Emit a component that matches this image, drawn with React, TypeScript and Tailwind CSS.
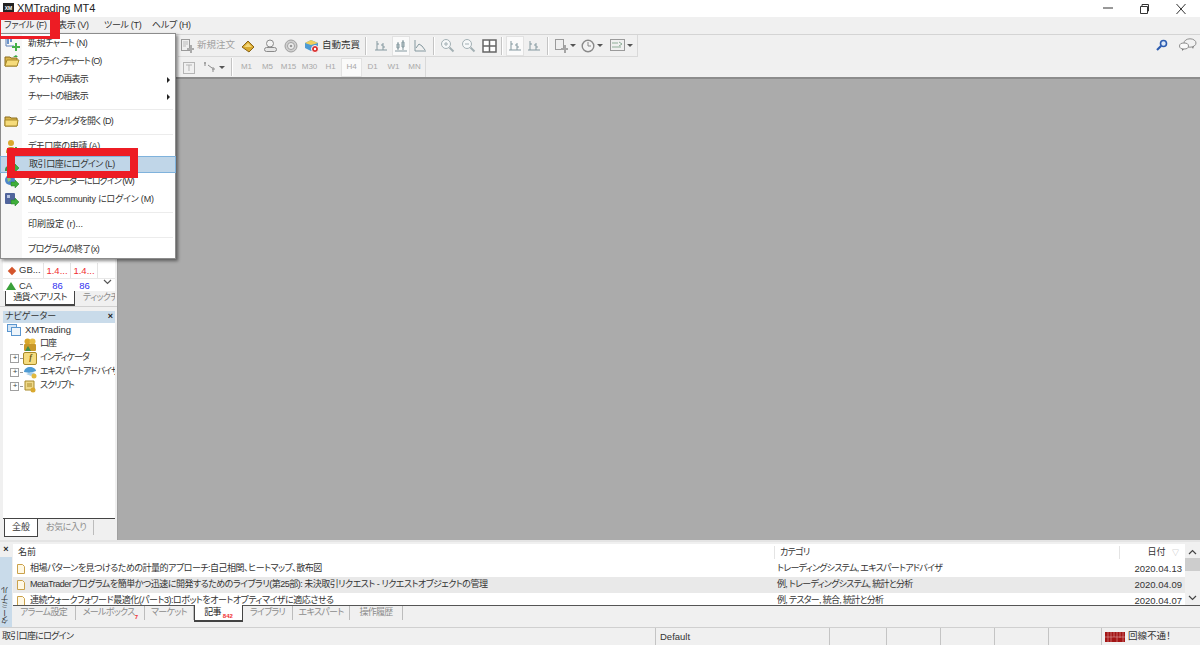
import type { ReactNode } from "react";

const Ic = ({ children, w = 14, h = 14 }: { children: ReactNode; w?: number; h?: number }) => (
  <svg width={w} height={h} viewBox={`0 0 ${w} ${h}`} className="block shrink-0">
    {children}
  </svg>
);

const Folder = ({ open }: { open?: boolean }) => (
  <Ic w={16} h={14}>
    <path d="M1 3h5l1 1h6v8H1z" fill="#d9b44a" stroke="#8a6d1f" />
    <path d={open ? "M3 6h12l-2 6H1z" : "M1 6h13l-1 6H1z"} fill="#f6dc7c" stroke="#a88a2a" />
    {open && <path d="M9 3l3-2 2 2-2 0z" fill="#39a845" />}
  </Ic>
);

const Arrow = ({ x = 6, y = 6 }: { x?: number; y?: number }) => (
  <path transform={`translate(${x} ${y})`} d="M0 2h4V0l4 4-4 4V6H0z" fill="#3fae3a" stroke="#1f7a22" strokeWidth=".5" />
);

const MenuIcon = ({ kind }: { kind: string }) => {
  if (kind === "chart")
    return (
      <Ic w={16} h={15}>
        <path d="M2 1v9h8" fill="none" stroke="#5b7fb5" />
        <path d="M4 3v5M7 2v4" stroke="#6b93c9" strokeWidth="2" />
        <path d="M8 10h3V7h2v3h3v2h-3v3h-2v-3H8z" fill="#44b048" />
      </Ic>
    );
  if (kind === "open") return <Folder open />;
  if (kind === "folder") return <Folder />;
  if (kind === "demo")
    return (
      <Ic w={16} h={15}>
        <circle cx="7" cy="4" r="3" fill="#d9a92f" />
        <path d="M2 14c0-5 2-6 5-6s5 1 5 6z" fill="#c99a2a" />
        <path d="M9 10h2V8h2v2h2v2h-2v2h-2v-2H9z" fill="#44b048" />
      </Ic>
    );
  if (kind === "login")
    return (
      <Ic w={16} h={15}>
        <circle cx="6" cy="4" r="3" fill="#d9a92f" />
        <path d="M1 13c0-5 2-5 5-5s4 1 4 5z" fill="#3f8f4a" />
        <Arrow x={7} y={6} />
      </Ic>
    );
  if (kind === "web")
    return (
      <Ic w={16} h={15}>
        <circle cx="6" cy="6" r="5" fill="#4d86c9" />
        <path d="M3 4l3-1 1 3-3 2z" fill="#8fc07a" />
        <Arrow x={7} y={6} />
      </Ic>
    );
  return (
    <Ic w={16} h={15}>
      <rect x="1" y="1" width="10" height="11" rx="1" fill="#51659c" />
      <rect x="3" y="3" width="3" height="3" fill="#b9c6e4" />
      <Arrow x={7} y={6} />
    </Ic>
  );
};

const menu = [
  { label: "新規チャート (N)", icon: "chart", t: "tracking-[-0.5px]" },
  { label: "オフラインチャート (O)", icon: "open", t: "tracking-[-1px]" },
  { label: "チャートの再表示", sub: true, t: "tracking-[-0.9px]" },
  { label: "チャートの組表示", sub: true, t: "tracking-[-0.9px]" },
  { sep: true },
  { label: "データフォルダを開く (D)", icon: "folder", t: "tracking-[-0.7px]" },
  { sep: true },
  { label: "デモ口座の申請 (A)", icon: "demo", t: "tracking-[-0.4px]" },
  { label: "取引口座にログイン (L)", icon: "login", active: true, t: "tracking-[-0.4px]" },
  { label: "ウェブトレーダーにログイン (W)", icon: "web", t: "tracking-[-1px]" },
  { label: "MQL5.community にログイン (M)", icon: "mql", t: "tracking-[-0.2px]" },
  { sep: true },
  { label: "印刷設定 (r)...", t: "tracking-normal" },
  { sep: true },
  { label: "プログラムの終了(x)", t: "tracking-[-0.65px]" },
];

const FileMenu = () => (
  <div className="absolute left-0 top-[33px] z-20 w-[176px] h-[226px] bg-white border border-[#8c8c8c] shadow-[2px_2px_3px_rgba(0,0,0,0.45)] flex flex-col pt-px">
    <div className="absolute left-0 top-0 bottom-0 w-[21px] bg-[#f7f7f7]" />
    {menu.map((m, i) =>
      m.sep ? (
        <div key={i} className="h-[7px] flex items-center pl-[27px] pr-[2px] shrink-0">
          <div className="h-px w-full bg-[#ececec]" />
        </div>
      ) : (
        <div
          key={i}
          className={`relative h-[17.75px] shrink-0 flex items-center pl-[27px] text-[#333] ${m.t} ${
            m.active ? "bg-[#c0d6e8] border border-[#7fb2dc] -mx-px pl-[28px]" : ""
          }`}
        >
          {m.icon && (
            <span className="absolute left-[3px] top-[1px]">
              <MenuIcon kind={m.icon} />
            </span>
          )}
          {m.label}
          {m.sub && <span className="absolute right-[5px] top-[6px] border-l-[3px] border-l-[#222] border-y-[3px] border-y-transparent" />}
        </div>
      ),
    )}
  </div>
);

const Sep = () => <div className="w-[2px] h-[18px] mx-[3px] bg-[#c4c4c4] border-r border-white shrink-0" />;

const Tool = ({ w = 22, active, children }: { w?: number; active?: boolean; children: ReactNode }) => (
  <div
    className={`h-[20px] flex items-center justify-center shrink-0 ${active ? "bg-[#fafafa] border border-[#e2e2e2]" : ""}`}
    style={{ width: w }}
  >
    {children}
  </div>
);

const Candle = ({ kind }: { kind: number }) => (
  <Ic w={14} h={14}>
    {kind === 0 && <path d="M3 2v9M1 11h12M3 5h2M9 4v7M7 6h2M9 8h2" stroke="#84989f" fill="none" />}
    {kind === 1 && <path d="M4 3v8M9 1v10M1 12h12M3 5h2v4H3zM8 3h2v5H8z" stroke="#84989f" fill="#f2f6f2" />}
    {kind === 2 && <path d="M2 1v11h11M3 9l3-4 3 2 3 4" stroke="#84989f" fill="none" />}
  </Ic>
);

const Drop = () => <span className="ml-[2px] border-t-[3px] border-t-[#555] border-x-[3px] border-x-transparent" />;

const Zoom = ({ plus }: { plus?: boolean }) => (
  <Ic w={15} h={15}>
    <circle cx="6" cy="6" r="4.5" fill="#f6f8f9" stroke="#a3b0b4" />
    <path d="M9.5 9.5l4 4" stroke="#a3b0b4" strokeWidth="2" />
    <path d={plus ? "M4 6h4M6 4v4" : "M4 6h4"} stroke="#a3b0b4" />
  </Ic>
);

const Toolbar = () => (
  <div className="h-[43px] bg-[#f0f0f0] border-t border-[#d4d4d4] pl-[178px]">
    <div className="h-[22px] w-[460px] flex items-center border-b border-r border-[#d9d9d9]">
      <Tool w={18}>
        <Ic w={14} h={15}>
          <rect x="1.5" y="1.5" width="8" height="11" fill="#eee" stroke="#9a9a9a" />
          <path d="M3 4h5M3 6h5M3 8h3" stroke="#bbb" />
          <path d="M7 10h3V7h2v3h2v2h-2v3h-2v-3H7z" fill="#ababab" />
        </Ic>
      </Tool>
      <span className="w-[42px] text-[#a0a0a0] text-[9.5px] pl-px">新規注文</span>
      <Tool w={20}>
        <Ic w={14} h={14}>
          <path d="M1 8l6-6 6 6-5 5z" fill="#d9a92f" stroke="#8a651a" />
          <path d="M3 8l4-4 4 4" fill="#f4d77a" />
        </Ic>
      </Tool>
      <Tool w={24}>
        <Ic w={15} h={14}>
          <circle cx="7" cy="4.5" r="3.5" fill="#f3f3f3" stroke="#8a8a8a" />
          <rect x="1.5" y="8.5" width="12" height="4" rx="2" fill="#e6e6e6" stroke="#8a8a8a" />
        </Ic>
      </Tool>
      <Tool w={18}>
        <Ic w={14} h={14}>
          <circle cx="7" cy="7" r="6" fill="#cfcfcf" stroke="#a0a0a0" />
          <circle cx="7" cy="7" r="3.5" fill="#eee" stroke="#a0a0a0" />
          <circle cx="7" cy="7" r="1.3" fill="#999" />
        </Ic>
      </Tool>
      <Tool>
        <Ic w={15} h={15}>
          <path d="M1 5l6-3 7 3v5l-7 3-6-3z" fill="#4d9bd4" />
          <path d="M1 5l6 2 7-2-7-3z" fill="#f1cf5c" />
          <circle cx="11" cy="11" r="3.5" fill="#d82c2c" stroke="#fff" />
          <circle cx="11" cy="11" r="1.2" fill="#fff" />
        </Ic>
      </Tool>
      <span className="w-[40px] text-[#333] text-[9.5px]">自動売買</span>
      <Sep />
      <Tool><Candle kind={0} /></Tool>
      <Tool w={18} active><Candle kind={1} /></Tool>
      <Tool w={20}><Candle kind={2} /></Tool>
      <Sep />
      <Tool w={18}><Zoom plus /></Tool>
      <Tool w={24}><Zoom /></Tool>
      <Tool w={18}>
        <Ic w={15} h={14}>
          <path d="M1 1h13v12H1zM1 7h13M7.5 1v12" fill="#fff" stroke="#666" strokeWidth="1.5" />
        </Ic>
      </Tool>
      <Sep />
      <Tool w={18} active><Candle kind={0} /></Tool>
      <Tool w={20}><Candle kind={0} /></Tool>
      <Sep />
      <Tool w={26}>
        <Ic w={14} h={15}>
          <rect x="1.5" y="1.5" width="8" height="10" fill="#eee" stroke="#9a9a9a" />
          <path d="M7 10h3V7h2v3h2v2h-2v3h-2v-3H7z" fill="#a5a5a5" />
        </Ic>
        <Drop />
      </Tool>
      <Tool w={28}>
        <Ic w={14} h={14}>
          <circle cx="7" cy="7" r="5.8" fill="#f3f3f3" stroke="#8a8a8a" strokeWidth="1.4" />
          <path d="M7 3v4h3" fill="none" stroke="#8a8a8a" />
        </Ic>
        <Drop />
      </Tool>
      <Tool w={30}>
        <Ic w={15} h={13}>
          <rect x=".5" y=".5" width="14" height="11" fill="#f0f0f0" stroke="#9a9a9a" />
          <path d="M2 4h6M2 8h9M9 3l3 2-3 2" fill="none" stroke="#8fae98" />
        </Ic>
        <Drop />
      </Tool>
    </div>
    <div className="h-[20px] w-[248px] flex items-center border-r border-[#d9d9d9]">
      <Tool>
        <Ic w={13} h={13}>
          <rect x=".5" y="1.5" width="11" height="11" fill="none" stroke="#b5b5b5" />
          <path d="M3 4h6M6 4v6" stroke="#b5b5b5" />
        </Ic>
      </Tool>
      <Tool w={28}>
        <Ic w={14} h={12}>
          <path d="M2 1v4M1 2h2M5 4l4 3M10 6v5M9 8h3" stroke="#8a8a8a" fill="none" />
        </Ic>
        <Drop />
      </Tool>
      <Sep />
      {["M1", "M5", "M15", "M30", "H1", "H4", "D1", "W1", "MN"].map((t) => (
        <div
          key={t}
          className={`w-[21.4px] h-[19px] flex items-center justify-center text-[8px] text-[#a8a8a8] ${
            t === "H4" ? "bg-[#fafafa] border border-[#e2e2e2]" : ""
          }`}
        >
          {t}
        </div>
      ))}
    </div>
  </div>
);

const TabLabel = ({ children, active, w }: { children: ReactNode; active?: boolean; w: number }) => (
  <div
    className={`flex items-center justify-center shrink-0 tracking-[-0.7px] ${
      active ? "h-[17px] bg-white border-x border-b-2 border-[#444] text-[#222]" : "h-[14px] mt-px text-[#8c8c8c] border-r border-[#bcbcbc]"
    }`}
    style={{ width: w }}
  >
    {children}
  </div>
);

const Plus = () => (
  <span className="w-[9px] h-[9px] border border-[#a0a0a0] bg-white flex items-center justify-center text-[8px] leading-none text-[#444] shrink-0">
    +
  </span>
);

const TreeRow = ({ label, exp, children }: { label: string; exp?: boolean; children: ReactNode }) => (
  <div className="h-[14px] flex items-center gap-px pl-[7px] text-[#333] tracking-[-1px]">
    {exp ? <Plus /> : <span className="w-[9px] shrink-0" />}
    <span className="w-[2px] border-t border-dotted border-[#999] shrink-0" />
    {children}
    <span className="ml-[2px]">{label}</span>
  </div>
);

const LeftPanel = () => (
  <div className="w-[118px] shrink-0 bg-[#f0f0f0] border-r border-[#a0a0a0] flex flex-col overflow-hidden">
    <div className="h-[228px] flex flex-col justify-end pl-[3px] pr-[2px] border-b border-[#d0d0d0]">
      <div className="bg-white flex-1 flex flex-col justify-end overflow-hidden relative text-[9.5px]">
        <div className="h-[16px] flex items-center shrink-0 border-b border-[#e8e8e8]">
          <span className="w-[41px] flex items-center gap-[3px] pl-[5px] text-[#333] border-r border-[#e4e4e4] h-full">
            <span className="w-[8px] h-[8px] bg-[#d4552c] rotate-45 scale-75" />
            GB...
          </span>
          <span className="w-[27px] text-center text-[#f03030] border-r border-[#e4e4e4] h-full leading-[16px]">1.4...</span>
          <span className="w-[27px] text-center text-[#f03030] border-r border-[#e4e4e4] h-full leading-[16px]">1.4...</span>
        </div>
        <div className="h-[12px] flex shrink-0 overflow-hidden">
          <span className="w-[41px] flex items-start gap-[3px] pl-[3px] text-[#333] leading-[14px]">
            <span className="mt-[3px] border-b-[8px] border-b-[#3aa03a] border-x-[5px] border-x-transparent" />
            CA
          </span>
          <span className="w-[27px] text-center text-[#3030f0] leading-[14px]">86</span>
          <span className="w-[27px] text-center text-[#3030f0] leading-[14px]">86</span>
        </div>
        <svg width="9" height="6" viewBox="0 0 9 6" className="absolute right-[3px] bottom-[6px]">
          <path d="M1 1l3.5 3.5L8 1" fill="none" stroke="#555" strokeWidth="1.2" />
        </svg>
      </div>
      <div className="h-[15px] shrink-0 flex overflow-hidden">
        <div className="w-[70px] ml-[2px] bg-white border-x border-b-2 border-[#444] text-center text-[#333] leading-[13px] shrink-0 tracking-[-0.6px]">通貨ペアリスト</div>
        <div className="pl-[8px] text-[#8c8c8c] leading-[13px] tracking-[-0.6px]">ティックチャート</div>
      </div>
    </div>
    <div className="flex-1 flex flex-col pl-[3px] pr-[2px] pt-[4px] min-h-0">
      <div className="h-[12px] bg-[#c9dbea] flex items-center justify-between px-[2px] text-[#333] shrink-0">
        ナビゲーター
        <span className="font-bold text-[#222]">×</span>
      </div>
      <div className="flex-1 bg-white overflow-hidden min-h-0">
        <div className="h-[14px] flex items-center gap-[4px] pl-[4px] text-[9.5px] text-[#333]">
          <Ic w={14} h={12}>
            <rect x=".5" y=".5" width="9" height="7" fill="#d5e6f6" stroke="#5a96cf" />
            <rect x="4.5" y="3.5" width="9" height="8" fill="#eef5fb" stroke="#5a96cf" />
          </Ic>
          XMTrading
        </div>
        <TreeRow label="口座">
          <Ic w={14} h={13}>
            <circle cx="4.5" cy="3.5" r="3" fill="#d8a62a" />
            <circle cx="9.5" cy="3.5" r="3" fill="#e8bd45" />
            <rect x="1" y="6" width="12" height="7" rx="1" fill="#c9982a" />
            <path d="M2 13l3-5 3 5z" fill="#3f8f4a" />
          </Ic>
        </TreeRow>
        <TreeRow label="インディケータ" exp>
          <span className="w-[14px] h-[13px] bg-[#f5dc80] border border-[#a88a2a] rounded-[2px] flex items-center justify-center text-[8px] italic font-bold text-[#6e5a10] shrink-0 font-['Liberation_Serif']">f</span>
        </TreeRow>
        <TreeRow label="エキスパートアドバイザ" exp>
          <Ic w={14} h={13}>
            <path d="M1 6c0-3 3-5 6-5s6 2 6 4l-6 2z" fill="#4d9bd4" />
            <path d="M3 8l5-2 4 1-4 3z" fill="#a9cfe9" />
            <circle cx="11" cy="10" r="2.5" fill="#e2b93f" />
          </Ic>
        </TreeRow>
        <TreeRow label="スクリプト" exp>
          <Ic w={14} h={13}>
            <path d="M2 1h9v9H2z" fill="#efd98a" stroke="#a88a2a" />
            <path d="M4 4h5M4 6h5" stroke="#a88a2a" />
            <circle cx="10" cy="10" r="2.5" fill="#d9a92f" />
          </Ic>
        </TreeRow>
      </div>
      <div className="h-[22px] shrink-0 flex items-start pl-px border-t border-[#444]">
        <div className="w-[34px] h-[18px] bg-white border-x border-b border-[#444] text-center leading-[17px] text-[#333]">全般</div>
        <div className="w-[56px] h-[15px] mt-px pl-[8px] text-[#8c8c8c] border-r border-[#bcbcbc] leading-[14px] tracking-[-0.5px]">お気に入り</div>
      </div>
    </div>
  </div>
);

const rows = [
  ["相場パターンを見つけるための計量的アプローチ:自己相関、ヒートマップ、散布図", "トレーディングシステム, エキスパートアドバイザ", "2020.04.13"],
  ["MetaTraderプログラムを簡単かつ迅速に開発するためのライブラリ(第25部): 未決取引リクエスト - リクエストオブジェクトの管理", "例, トレーディングシステム, 統計と分析", "2020.04.09"],
  ["連続ウォークフォワード最適化(パート3):ロボットをオートオプティマイザに適応させる", "例, テスター, 統合, 統計と分析", "2020.04.07"],
];

const Terminal = () => (
  <div className="h-[87px] shrink-0 bg-[#f0f0f0] flex border-t-[2px] border-[#e4e4e4] pt-[2px] text-[#333]">
    <div className="w-[12px] shrink-0 flex flex-col items-center">
      <span className="h-[10px] font-bold leading-[10px] text-[#222]">×</span>
      <div className="flex-1 w-full bg-[#c9dbea] flex items-end justify-center mt-[3px] pb-[3px] overflow-hidden">
        <span className="[writing-mode:vertical-rl] rotate-180 text-[8px] leading-none tracking-[-0.5px]">ターミナル</span>
      </div>
    </div>
    <div className="flex-1 min-w-0 flex flex-col">
      <div className="h-[62px] shrink-0 flex bg-white overflow-hidden border-b-[1.5px] border-[#555] ml-px">
        <div className="flex-1 min-w-0 flex flex-col overflow-hidden">
          <div className="h-[17px] shrink-0 flex items-center">
            <span className="w-[762px] pl-[5px] border-r border-[#e4e4e4]">名前</span>
            <span className="w-[345px] pl-[5px] border-r border-[#e4e4e4] tracking-[-0.7px]">カテゴリ</span>
            <span className="flex-1 text-right pr-[6px]">日付 <span className="text-[#aaa] text-[7px] pl-[4px]">▽</span></span>
          </div>
          {rows.map((r, i) => (
            <div key={i} className={`h-[16px] shrink-0 flex items-center ${i === 1 ? "bg-[#e9e9e9]" : ""}`}>
              <span className="w-[762px] pl-[4px] flex items-center gap-[5px] overflow-hidden tracking-[-0.5px]">
                <svg width="8" height="10" viewBox="0 0 8 10" className="shrink-0">
                  <path d="M.5.5h5l2 2v7h-7z" fill="#fff8e4" stroke="#caa14a" />
                </svg>
                {r[0]}
              </span>
              <span className="w-[345px] pl-[2px] tracking-[-0.7px]">{r[1]}</span>
              <span className="flex-1 text-right pr-[3px] text-[9.5px]">{r[2]}</span>
            </div>
          ))}
        </div>
        <div className="w-[15px] shrink-0 bg-[#f0f0f0] flex flex-col items-center justify-between relative">
          <svg width="9" height="6" viewBox="0 0 9 6" className="mt-[5px]">
            <path d="M1 5l3.5-3.5L8 5" fill="none" stroke="#444" strokeWidth="1.2" />
          </svg>
          <div className="absolute top-[14px] left-0 w-full h-[13px] bg-[#cdcdcd]" />
          <svg width="9" height="6" viewBox="0 0 9 6" className="mb-[4px]">
            <path d="M1 1l3.5 3.5L8 1" fill="none" stroke="#444" strokeWidth="1.2" />
          </svg>
        </div>
      </div>
      <div className="h-[18px] flex items-start -mt-px relative">
        <TabLabel w={64}>アラーム設定</TabLabel>
        <TabLabel w={69}><span className="flex items-end">メールボックス<span className="text-[#f03030] text-[6px] font-bold leading-none">7</span></span></TabLabel>
        <TabLabel w={49}>マーケット</TabLabel>
        <TabLabel w={49} active><span className="flex items-end">記事<span className="text-[#f03030] text-[6px] font-bold ml-[2px] leading-none tracking-normal">842</span></span></TabLabel>
        <TabLabel w={50}>ライブラリ</TabLabel>
        <TabLabel w={57}>エキスパート</TabLabel>
        <TabLabel w={53}>操作履歴</TabLabel>
      </div>
    </div>
  </div>
);

const StatusBar = () => (
  <div className="h-[18px] shrink-0 bg-[#f0f0f0] border-t border-[#d0d0d0] flex items-center text-[#333]">
    <div className="w-[655px] pl-[2px] tracking-[-0.7px]">取引口座にログイン</div>
    <div className="w-[174px] h-full pl-[4px] border-l border-[#c4c4c4] leading-[17px] text-[9.5px]">Default</div>
    {[57, 54, 54, 54, 53].map((w, i) => (
      <div key={i} className="h-full border-l border-[#c4c4c4]" style={{ width: w }} />
    ))}
    <div className="flex-1 h-full border-l border-[#c4c4c4] flex items-center pl-[3px] gap-[3px] text-[9.5px]">
      <svg width="20" height="10" viewBox="0 0 20 10" className="shrink-0">
        <rect width="20" height="10" fill="#a31515" />
        <path d="M3 0v10M6 0v10M9 0v5M12 0v10M15 0v6M18 0v10M0 5h20" stroke="#e9b5b5" strokeWidth=".5" />
      </svg>
      回線不通！
    </div>
  </div>
);

export default function App() {
  return (
    <div className="relative w-[1200px] h-[645px] overflow-hidden bg-[#ababab] flex flex-col text-[9px] whitespace-nowrap [font-feature-settings:'palt'] font-['Liberation_Sans','Noto_Sans_CJK_JP',sans-serif]">
      <div className="h-[17px] shrink-0 bg-white flex items-center">
        <div className="w-[11px] h-[11px] ml-[3px] bg-[#222] text-white text-[5px] font-bold flex items-center justify-center">XM</div>
        <span className="ml-[3px] text-[11px] text-[#222]">XMTrading MT4</span>
        <div className="ml-auto mr-[1px] flex items-center">
          {[
            <path key="m" d="M1 5h10" stroke="#333" />,
            <path key="r" d="M2.5 3.5h7v7h-7zM4 3V1.5h6.5V8H10" fill="none" stroke="#333" />,
            <path key="c" d="M1.5 1l9 10M10.5 1l-9 10" stroke="#333" />,
          ].map((p, i) => (
            <div key={i} className="w-[36.5px] flex justify-center">
              <svg width="12" height="12" viewBox="0 0 12 12">{p}</svg>
            </div>
          ))}
        </div>
      </div>
      <div className="h-[17px] shrink-0 bg-[#f0f0f0] flex items-center text-[#333] tracking-[-0.3px]">
        <span className="w-[50px] pl-[4px]">ファイル (F)</span>
        <span className="w-[1px] h-[12px] bg-[#bdbdbd]" />
        <span className="w-[53px] pl-[7px]">表示 (V)</span>
        <span className="w-[48px]">ツール (T)</span>
        <span>ヘルプ (H)</span>
      </div>
      <div className="relative shrink-0">
        <Toolbar />
        <div className="absolute right-[3px] top-[4px] flex items-center gap-[11px]">
          <svg width="12" height="12" viewBox="0 0 12 12">
            <circle cx="7.5" cy="4.5" r="3" fill="#dce8f8" stroke="#2c5cb0" strokeWidth="1.6" />
            <path d="M5 7l-4 4" stroke="#2c5cb0" strokeWidth="2.2" />
          </svg>
          <svg width="18" height="13" viewBox="0 0 18 13">
            <ellipse cx="11" cy="5" rx="6" ry="4.2" fill="#f2f2f2" stroke="#8f8f8f" />
            <ellipse cx="5" cy="8" rx="4.5" ry="3" fill="#fafafa" stroke="#8f8f8f" />
            <path d="M3 11v2l2-2zM13 9l1 2 1-3z" fill="#777" />
          </svg>
        </div>
      </div>
      <div className="flex-1 flex min-h-0 border-t-2 border-[#8c8c8c]">
        <LeftPanel />
        <div className="flex-1 bg-[#ababab]" />
      </div>
      <Terminal />
      <StatusBar />
      <FileMenu />
      <div className="absolute left-0 top-[12px] w-[60px] h-[27px] z-30 border-[#ed1c24] border-t-[8px] border-r-[10px] border-b-[3px] border-l-[1px]" />
      <div className="absolute left-[7px] top-[148px] w-[131px] h-[30px] z-30 border-[#ed1c24] border-t-[8px] border-r-[8px] border-b-[7px] border-l-[8px]" />
    </div>
  );
}
